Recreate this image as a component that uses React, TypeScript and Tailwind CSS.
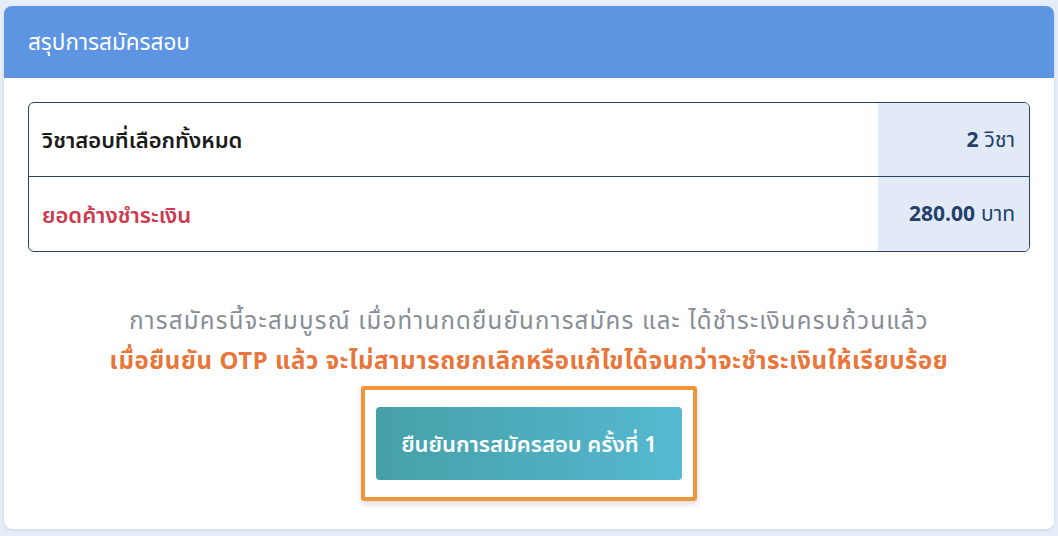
export default function App() {
  return (
    <div
      className="min-h-screen w-full bg-[#e4edf8] px-[4px] pt-[6px] pb-[8px]"
      style={{ fontFamily: '"Noto Sans", "Noto Sans Thai", Roboto, sans-serif' }}
    >
      <div className="overflow-hidden rounded-[8px] bg-white shadow-[0_1px_3px_rgba(0,0,0,0.12)]">
        {/* header */}
        <div className="flex h-[72px] items-center bg-[#5e95e3] px-[24px]">
          <h2 className="text-[22.5px] font-normal text-white">สรุปการสมัครสอบ</h2>
        </div>

        <div className="px-[24px] pt-[24px] pb-[28px]">
          {/* summary table */}
          <div className="overflow-hidden rounded-[6px] border border-[#2b4462]">
            <div className="flex h-[74px] border-b border-[#2b4462]">
              <div className="flex flex-1 items-center px-[13px] text-[22px] font-semibold text-[#1b1b1b]">
                วิชาสอบที่เลือกทั้งหมด
              </div>
              <div className="flex w-[151px] items-center justify-end bg-[#e3eaf7] px-[14px] text-[21px] text-[#22406b]">
                <span className="font-bold">2</span>
                <span className="ml-[6px]">วิชา</span>
              </div>
            </div>
            <div className="flex h-[74px]">
              <div className="flex flex-1 items-center px-[13px] text-[22px] font-semibold text-[#cc3a4f]">
                ยอดค้างชำระเงิน
              </div>
              <div className="flex w-[151px] items-center justify-end bg-[#e3eaf7] px-[14px] text-[21px] text-[#22406b]">
                <span className="font-bold">280.00</span>
                <span className="ml-[6px]">บาท</span>
              </div>
            </div>
          </div>

          {/* notes */}
          <div className="mt-[48px] flex flex-col items-center text-center">
            <p className="text-[24px] leading-[40px] tracking-[1.25px] text-[#878c96]">
              การสมัครนี้จะสมบูรณ์ เมื่อท่านกดยืนยันการสมัคร และ ได้ชำระเงินครบถ้วนแล้ว
            </p>
            <p className="text-[24px] font-bold leading-[40px] tracking-[0.6px] text-[#e8763a]">
              เมื่อยืนยัน OTP แล้ว จะไม่สามารถยกเลิกหรือแก้ไขได้จนกว่าจะชำระเงินให้เรียบร้อย
            </p>

            <div className="mt-[6px] rounded-[3px] border-[4px] border-[#f0963a] px-[11px] py-[17px] shadow-[0_3px_6px_rgba(0,0,0,0.15)]">
              <button className="flex h-[73px] w-[306px] items-center justify-center rounded-[4px] bg-gradient-to-r from-[#45a0a8] to-[#56b9d1] text-[22px] font-semibold text-white">
                ยืนยันการสมัครสอบ ครั้งที่ 1
              </button>
            </div>
          </div>
        </div>
      </div>
    </div>
  );
}
